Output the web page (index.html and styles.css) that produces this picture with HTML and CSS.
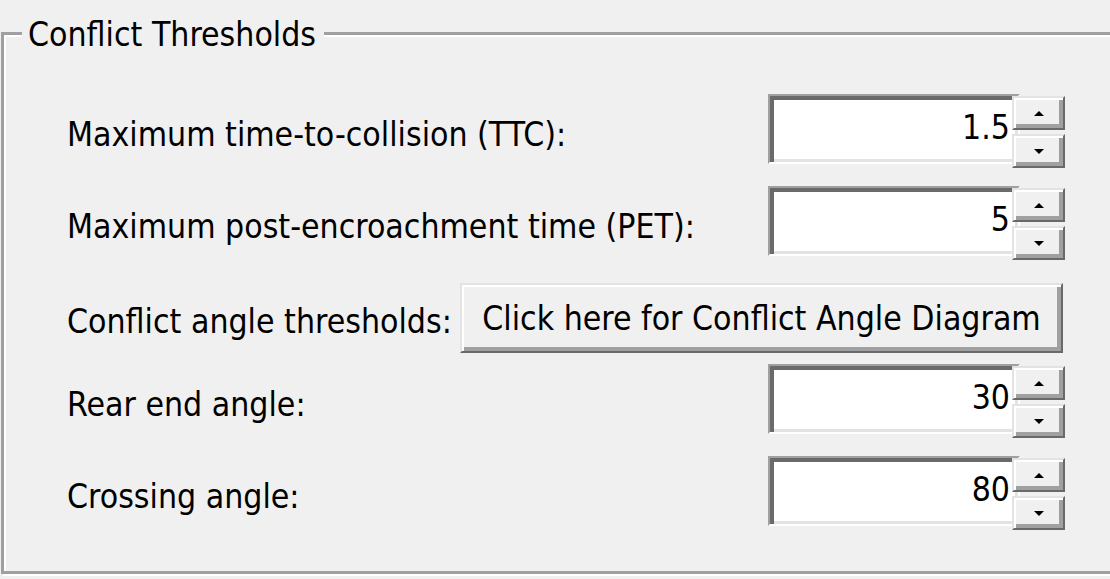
FILE: index.html
```html
<!DOCTYPE html>
<html>
<head>
<meta charset="utf-8">
<link rel="stylesheet" href="styles.css">
</head>
<body>
<div class="group">
  <div class="legend">Conflict Thresholds</div>
  <div class="rows">
    <div class="row r1">
      <span class="label">Maximum time-to-collision (TTC):</span>
      <div class="spinner"><div class="edit">1.5</div><div class="spin"><div class="sbtn"><i class="up"></i></div><div class="sbtn"><i class="down"></i></div></div></div>
    </div>
    <div class="row r2">
      <span class="label">Maximum post-encroachment time (PET):</span>
      <div class="spinner"><div class="edit">5</div><div class="spin"><div class="sbtn"><i class="up"></i></div><div class="sbtn"><i class="down"></i></div></div></div>
    </div>
    <div class="row r3 btnrow">
      <span class="label">Conflict angle thresholds:</span>
      <button class="btn">Click here for Conflict Angle Diagram</button>
    </div>
    <div class="row r4">
      <span class="label">Rear end angle:</span>
      <div class="spinner"><div class="edit">30</div><div class="spin"><div class="sbtn"><i class="up"></i></div><div class="sbtn"><i class="down"></i></div></div></div>
    </div>
    <div class="row r5">
      <span class="label">Crossing angle:</span>
      <div class="spinner"><div class="edit">80</div><div class="spin"><div class="sbtn"><i class="up"></i></div><div class="sbtn"><i class="down"></i></div></div></div>
    </div>
  </div>
</div>
</body>
</html>
```

FILE: styles.css
```css
html, body {
  margin: 0;
  padding: 0;
  background: #f0f0f0;
  overflow: hidden;
}
body {
  font-family: "DejaVu Sans Condensed", "DejaVu Sans", sans-serif;
  font-size: 33.5px;
  color: #000;
  width: 1110px;
  height: 579px;
}
.group {
  position: relative;
  margin: 32px 0 0 1px;
  width: 1150px;
  height: 536px;
  border: 3px solid #a0a0a0;
  box-shadow: inset 2px 2px 0 #fff, 2px 2px 0 #fff;
}
.legend {
  position: absolute;
  top: -22px;
  left: 18px;
  padding: 0 8px 0 6px;
  background: #f0f0f0;
  line-height: 44px;
}
.rows {
  display: flex;
  flex-direction: column;
  padding: 60px 0 0 63px;
  width: 998px;
}
.row {
  display: flex;
  align-items: center;
  justify-content: space-between;
  height: 72px;
}
.r2 { margin-top: 20px; }
.r3 { margin-top: 24px; height: 70px; }
.r4 { margin-top: 12px; }
.r5 { margin-top: 20px; }
.label {
  white-space: nowrap;
  padding-top: 6px;
}
.spinner {
  display: flex;
  height: 74px;
}
.edit {
  box-sizing: border-box;
  width: 252px;
  height: 70px;
  background: #fff;
  border-style: solid;
  border-width: 2px;
  border-color: #a0a0a0 #fff #fff #a0a0a0;
  box-shadow: inset 4px 4px 0 #6a6a6a, inset -3px -3px 0 #e3e3e3;
  text-align: right;
  padding-right: 8px;
  line-height: 64px;
}
.spin {
  display: flex;
  flex-direction: column;
  gap: 4px;
  width: 53px;
  margin-left: -8px;
  padding-top: 2px;
}
.sbtn {
  flex: 1;
  box-sizing: border-box;
  background: #f0f0f0;
  border-style: solid;
  border-width: 2px;
  border-color: #e3e3e3 #696969 #696969 #e3e3e3;
  box-shadow: inset 2px 2px 0 #fff, inset -4px -4px 0 #a0a0a0;
  display: flex;
  align-items: center;
  justify-content: center;
}
.up, .down {
  display: block;
  width: 0;
  height: 0;
  border-left: 5px solid transparent;
  border-right: 5px solid transparent;
}
.up { border-bottom: 5px solid #000; }
.down { border-top: 5px solid #000; }
.btn {
  box-sizing: border-box;
  width: 603px;
  height: 70px;
  margin-right: 2px;
  padding: 0;
  font: inherit;
  color: #000;
  background: #f0f0f0;
  border-style: solid;
  border-width: 2px;
  border-color: #e3e3e3 #696969 #696969 #e3e3e3;
  box-shadow: inset 2px 2px 0 #fff, inset -4px -4px 0 #a0a0a0;
}
```
